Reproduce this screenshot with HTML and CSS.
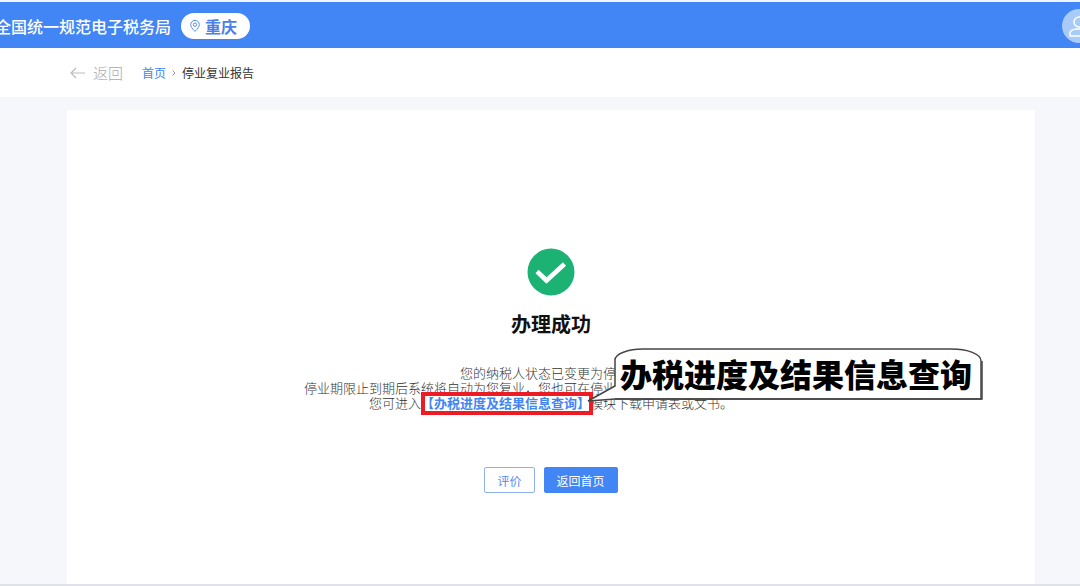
FILE: index.html
```
<!DOCTYPE html>
<html lang="zh-CN">
<head>
	<meta charset="utf-8">
	<title>停业复业报告</title>
	<link rel="stylesheet" href="styles.css">
</head>
<body>
	<header class="header">
		<h1 class="site">全国统一规范电子税务局</h1>
		<button type="button" class="city">
			<svg width="10" height="12" viewBox="0 0 10 12" fill="none" stroke="#5b8ce8">
				<path d="M5 11.4C2.2 8.6.7 6.6.7 4.7a4.3 4.3 0 0 1 8.6 0c0 1.900-1.500 3.900-4.300 6.700z"/>
				<circle cx="5" cy="4.700" r="1.700"/>
			</svg>
			<span>重庆</span>
		</button>
		<a href="#" class="avatar" aria-label="用户">
			<svg width="34" height="34" viewBox="0 0 34 34" fill="none" stroke="#fff" stroke-width="1.500">
				<circle cx="17" cy="13" r="5"/>
				<path d="M8 27v-3c0-2.500 4-4 9-4s9 1.500 9 4v3z"/>
			</svg>
		</a>
	</header>
	<nav class="nav">
		<a href="#" class="back">
			<svg width="15" height="12" viewBox="0 0 15 12" fill="none" stroke="#bbb" stroke-width="1.200">
				<path d="M15 6H1M6 1L1 6l5 5"/>
			</svg>
			<span>返回</span>
		</a>
		<a href="#" class="home">首页</a>
		<svg class="sep" width="4" height="6" viewBox="0 0 4 6" fill="none" stroke="#999">
			<path d="M.5.5L3 3 .5 5.500"/>
		</svg>
		<span class="current">停业复业报告</span>
	</nav>
	<main class="card">
		<svg class="ok" width="48" height="48" viewBox="0 0 48 48">
			<circle cx="24" cy="24" r="23.500" fill="#1bb274"/>
			<path d="M10 23.500l9.500 9L37.500 16" fill="none" stroke="#fff" stroke-width="4.600"/>
		</svg>
		<h2 class="title">办理成功</h2>
		<div class="desc">
			<p class="state">您的纳税人状态已变更为停</p>
			<p class="term">停业期限止到期后系统将自动为您复业，您也可在停业</p>
			<p>您可进入<a href="#" class="query">【办税进度及结果信息查询】<span class="callout"><svg width="398" height="56" viewBox="0 0 398 56" fill="#fff" stroke="#444" stroke-width="1.500"><path d="M29 13C29 7 42 2 57 2H365C382 2 395 7 395 14V52H29L2 54 29 39z"/><path d="M396 14V52H29" fill="none"/></svg><strong>办税进度及结果信息查询</strong></span></a>模块下载申请表或文书。</p>
		</div>
		<div class="btns">
			<button type="button" class="btn">评价</button>
			<button type="button" class="btn primary">返回首页</button>
		</div>
	</main>
</body>
</html>
```

FILE: styles.css
```
*{
	margin:0;
	padding:0;
	box-sizing:border-box;
}
body{
	display:flex;
	flex-direction:column;
	min-height:100vh;
	background:#f5f7fa;
	font-family:"Liberation Sans","Noto Sans CJK SC",sans-serif;
	font-size:12px;
	color:#333;
	overflow-x:hidden;
	border-bottom:2px solid #dfe2e8;
}
a{
	text-decoration:none;
}
svg{
	display:block;
	flex:none;
}
button{
	font-family:inherit;
	cursor:pointer;
}
.header{
	display:flex;
	align-items:center;
	height:48px;
	padding-top:2px;
	border-top:2px solid #eef4fd;
	background:#4285f4;
	overflow:hidden;
}
.site{
	margin-left:-5px;
	font-size:16px;
	font-weight:500;
	color:#fff;
	white-space:nowrap;
}
.city{
	display:flex;
	align-items:center;
	gap:5px;
	height:26px;
	margin-left:10px;
	padding:0 13px 0 9px;
	border:none;
	border-radius:13px;
	background:#fff;
	color:#4a80e8;
	font-size:16px;
	font-weight:700;
	white-space:nowrap;
}
.avatar{
	flex:none;
	margin-left:auto;
	margin-right:-16px;
	border-radius:50%;
	background:#a9cbfa;
}
.nav{
	display:flex;
	align-items:center;
	height:49px;
	padding-left:70px;
	background:#fff;
}
.back{
	display:flex;
	align-items:center;
	gap:8px;
	margin-right:19px;
	font-size:15px;
	font-weight:300;
	color:#aaa;
}
.home{
	color:#4285f4;
}
.sep{
	margin:0 6px;
}
.card{
	flex:1;
	display:flex;
	flex-direction:column;
	align-items:center;
	margin:13px 45px 0 67px;
	padding:138px 0 88px;
	background:#fff;
}
.title{
	margin-top:15px;
	line-height:28px;
	font-size:20px;
	font-weight:700;
	color:#111;
}
.desc{
	margin-top:27px;
	font-size:13px;
	line-height:15px;
	font-weight:300;
	text-align:center;
	white-space:nowrap;
}
.state{
	padding-right:2em;
}
.term{
	padding-right:14em;
}
.query{
	position:relative;
	color:#4285f4;
	font-weight:700;
}
.query::before{
	content:"";
	position:absolute;
	top:-4px;
	right:-3px;
	bottom:-4px;
	left:0;
	border:4px solid #ed1c24;
}
.callout{
	position:absolute;
	left:165px;
	bottom:8px;
}
.callout strong{
	position:absolute;
	top:6px;
	left:34px;
	font-size:32px;
	line-height:46px;
	color:#000;
}
.btns{
	display:flex;
	gap:9px;
	margin-top:56px;
}
.btn{
	height:26px;
	padding:0 12px;
	border:1px solid #8fb0f5;
	border-radius:2px;
	background:#fff;
	color:#5b8af0;
	font-size:12px;
}
.primary{
	border-color:#4285f4;
	background:#4285f4;
	color:#fff;
}
```
